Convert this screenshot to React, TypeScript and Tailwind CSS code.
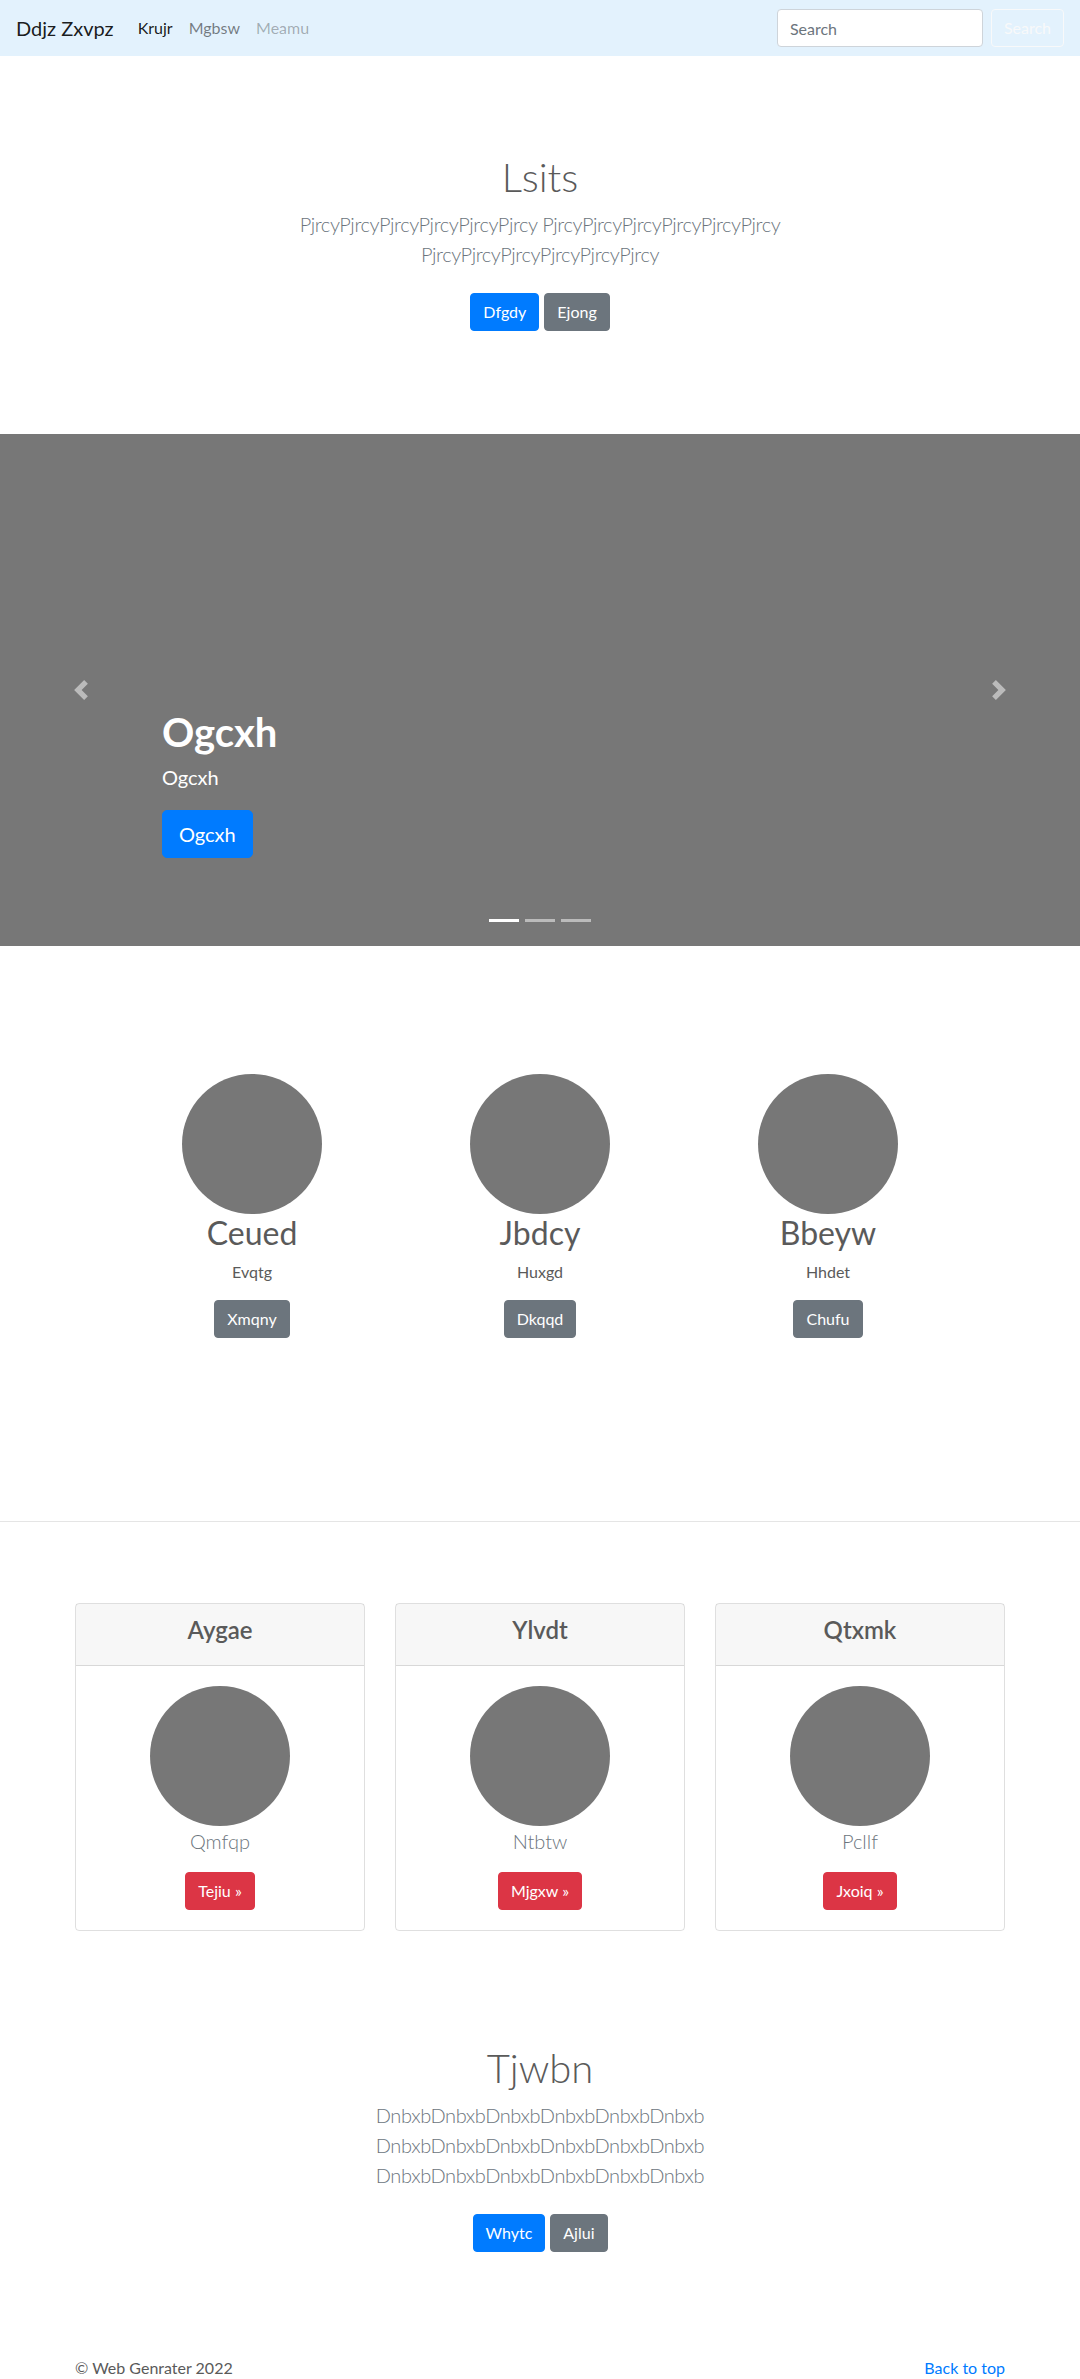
const navLinks = [
  { label: 'Krujr', cls: 'text-black/90' },
  { label: 'Mgbsw', cls: 'text-black/50' },
  { label: 'Meamu', cls: 'text-black/30' },
]

const people = [
  { name: 'Ceued', sub: 'Evqtg', btn: 'Xmqny' },
  { name: 'Jbdcy', sub: 'Huxgd', btn: 'Dkqqd' },
  { name: 'Bbeyw', sub: 'Hhdet', btn: 'Chufu' },
]

const cards = [
  { title: 'Aygae', sub: 'Qmfqp', btn: 'Tejiu' },
  { title: 'Ylvdt', sub: 'Ntbtw', btn: 'Mjgxw' },
  { title: 'Qtxmk', sub: 'Pcllf', btn: 'Jxoiq' },
]

const btn = 'inline-block rounded border px-3 py-1.5 text-[16px] leading-6 text-white'

function Circle() {
  return <div className="h-[140px] w-[140px] shrink-0 rounded-full bg-[#777]" />
}

function Chevron({ dir }: { dir: 'prev' | 'next' }) {
  return (
    <svg width="20" height="20" viewBox="0 0 8 8" className="opacity-50">
      <path
        fill="#fff"
        d={dir === 'prev' ? 'M5.25 0l-4 4 4 4 1.5-1.5L4.25 4l2.5-2.5L5.25 0z' : 'M2.75 0l-1.5 1.5L3.75 4l-2.5 2.5L2.75 8l4-4-4-4z'}
      />
    </svg>
  )
}

export default function App() {
  return (
    <div className="bg-white font-[family-name:Lato,'Open_Sans',sans-serif] text-[#5a5a5a]">
      <nav className="flex h-[56px] items-center bg-[#e3f2fd] px-4">
        <span className="mr-4 text-[20px] leading-[30px] text-black/90">Ddjz Zxvpz</span>
        <ul className="flex text-[16px]">
          {navLinks.map((l) => (
            <li key={l.label} className={`px-2 ${l.cls}`}>
              {l.label}
            </li>
          ))}
        </ul>
        <div className="ml-auto flex items-center">
          <input
            placeholder="Search"
            className="mr-2 h-[38px] w-[206px] rounded border border-[#ced4da] bg-white px-3 text-[16px] text-[#495057] outline-none placeholder:text-[#6c757d]"
          />
          <button className="h-[38px] rounded border border-[#f8f9fa] px-3 text-[16px] text-[#f8f9fa]">Search</button>
        </div>
      </nav>

      <section className="pb-[103px] pt-[97px] text-center">
        <h1 className="mb-2 text-[40px] font-light leading-[1.2]">Lsits</h1>
        <p className="mx-auto max-w-[600px] text-[20px] font-light leading-[30px] tracking-[-0.4px] text-[#6c757d]">
          PjrcyPjrcyPjrcyPjrcyPjrcyPjrcy PjrcyPjrcyPjrcyPjrcyPjrcyPjrcy PjrcyPjrcyPjrcyPjrcyPjrcyPjrcy
        </p>
        <div className="mt-6 flex justify-center gap-[5px]">
          <a className={`${btn} border-[#007bff] bg-[#007bff]`}>Dfgdy</a>
          <a className={`${btn} border-[#6c757d] bg-[#6c757d]`}>Ejong</a>
        </div>
      </section>

      <section className="relative h-[512px] bg-[#777]">
        <div className="absolute inset-y-0 left-0 flex w-[15%] items-center justify-center">
          <Chevron dir="prev" />
        </div>
        <div className="absolute inset-y-0 right-0 flex w-[15%] items-center justify-center">
          <Chevron dir="next" />
        </div>
        <div className="absolute bottom-[52px] left-[15%] right-[15%] pb-5 text-left text-white">
          <h1 className="mb-[6px] text-[40px] font-bold leading-[1.2]">Ogcxh</h1>
          <p className="mb-[18px] text-[20px] leading-[30px]">Ogcxh</p>
          <p className="mb-4">
            <a className="inline-block rounded-[5px] border border-[#007bff] bg-[#007bff] px-4 py-2 text-[20px] leading-[30px] text-white">
              Ogcxh
            </a>
          </p>
        </div>
        <ul className="absolute bottom-[24px] left-0 right-0 flex justify-center">
          <li className="mx-[3px] h-[3px] w-[30px] bg-white" />
          <li className="mx-[3px] h-[3px] w-[30px] bg-white/50" />
          <li className="mx-[3px] h-[3px] w-[30px] bg-white/50" />
        </ul>
      </section>

      <section className="mx-auto grid w-[864px] grid-cols-3 pt-[128px] text-center">
        {people.map((p) => (
          <div key={p.name} className="flex flex-col items-center">
            <Circle />
            <h2 className="mb-2 text-[32px] font-normal leading-[1.2]">{p.name}</h2>
            <p className="mb-4 text-[16px] leading-6">{p.sub}</p>
            <a className={`${btn} border-[#6c757d] bg-[#6c757d]`}>{p.btn}</a>
          </div>
        ))}
      </section>

      <hr className="mt-[183px] border-t border-black/10" />

      <section className="mx-auto mt-[81px] grid w-[930px] grid-cols-3 gap-[30px]">
        {cards.map((c) => (
          <div key={c.title} className="rounded border border-black/[.125] text-center">
            <div className="border-b border-black/[.125] bg-black/[.03] px-5 py-3">
              <h4 className="mb-2 text-[24px] font-semibold leading-[1.2]">{c.title}</h4>
            </div>
            <div className="flex flex-col items-center p-5">
              <Circle />
              <p className="mb-4 text-[20px] font-light leading-[30px] text-[#6c757d]">{c.sub}</p>
              <a className={`${btn} border-[#dc3545] bg-[#dc3545]`}>{c.btn} »</a>
            </div>
          </div>
        ))}
      </section>

      <section className="pt-[113px] text-center">
        <h1 className="mb-2 text-[40px] font-light leading-[1.2]">Tjwbn</h1>
        <p className="mx-auto max-w-[600px] text-[20px] font-light leading-[30px] tracking-[-0.4px] text-[#6c757d]">
          DnbxbDnbxbDnbxbDnbxbDnbxbDnbxb DnbxbDnbxbDnbxbDnbxbDnbxbDnbxb DnbxbDnbxbDnbxbDnbxbDnbxbDnbxb
        </p>
        <div className="mb-2 mt-6 flex justify-center gap-[5px]">
          <a className={`${btn} border-[#007bff] bg-[#007bff]`}>Whytc</a>
          <a className={`${btn} border-[#6c757d] bg-[#6c757d]`}>Ajlui</a>
        </div>
      </section>

      <footer className="mx-auto flex w-[930px] justify-between pt-[96px] text-[16px] leading-6">
        <p>© Web Genrater 2022</p>
        <a className="text-[#007bff]">Back to top</a>
      </footer>
    </div>
  )
}
